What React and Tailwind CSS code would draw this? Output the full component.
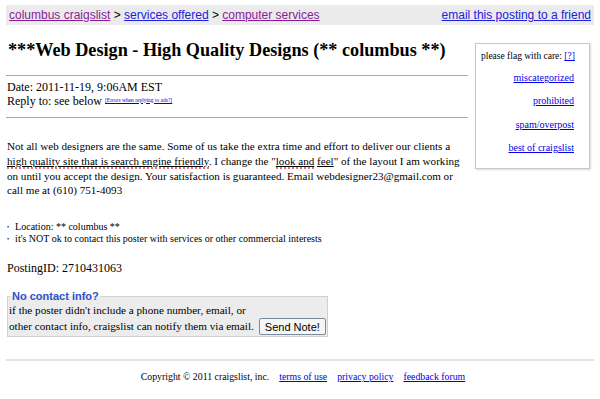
import React from "react";

const serif = "font-['Liberation_Serif',serif]";
const sans = "font-['Liberation_Sans',Arial,sans-serif]";

// spellcheck-style red dotted line under a phrase
const squiggle = "border-b-2 border-dotted border-[#f07070] underline";

function FlagBox() {
  const links = ["miscategorized", "prohibited", "spam/overpost", "best of craigslist"];
  return (
    <div className="mt-[18px] mr-[10px] h-[126px] w-[115px] shrink-0 border border-[#c8c8c8] bg-white pl-[5px] pr-[15px] pt-[6px] shadow-[1px_1px_2px_rgba(0,0,0,0.15)]">
      <div className="whitespace-nowrap text-[9.5px] leading-[12px] text-black">
        please flag with care: <a className="text-[#0000ee] underline">[?]</a>
      </div>
      <div className="mt-[4px] flex flex-col items-end">
        {links.map((l) => (
          <a key={l} className="whitespace-nowrap text-[10px] leading-[23.3px] text-[#0000ee] underline">
            {l}
          </a>
        ))}
      </div>
    </div>
  );
}

export default function App() {
  return (
    <div className={`${serif} h-[399px] w-[600px] overflow-hidden bg-white pt-[5px] text-black`}>
      {/* breadcrumb bar */}
      <div className={`${sans} mx-[6px] flex h-[20px] items-center justify-between bg-[#ebebeb] px-[3px] text-[12px]`}>
        <div>
          <a className="text-[#8b1a9b] underline">columbus craigslist</a> &gt;{" "}
          <a className="text-[#2020e0] underline">services offered</a> &gt;{" "}
          <a className="text-[#8b1a9b] underline">computer services</a>
        </div>
        <a className="text-[#2020e0] underline">email this posting to a friend</a>
      </div>

      <div className="flex">
        {/* left column */}
        <div className="ml-[6px] w-[462px]">
          <h2 className="mt-[14px] whitespace-nowrap pl-[2px] text-[18.2px] font-bold leading-[22px]">
            ***Web Design - High Quality Designs (** columbus **)
          </h2>
          <div className="mt-[14px] h-px bg-[#a8a8a8]" />

          <div className="mt-[5px] pl-[1px] text-[12px] leading-[13.5px]">
            <div>Date: 2011-11-19, 9:06AM EST</div>
            <div>
              Reply to: see below{" "}
              <sup className="relative top-[-3px] align-baseline text-[5.5px] text-[#0000ee] underline">
                [Errors when replying to ads?]
              </sup>
            </div>
          </div>

          <div className="mt-[9px] h-px bg-[#a8a8a8]" />

          <p className="mt-[21px] pl-[1px] text-[11.1px] leading-[14.8px]">
            Not all web designers are the same. Some of us take the extra time and effort to deliver our clients a{" "}
            <span className={squiggle}>high quality site that is search engine friendly</span>. I change the &quot;
            <span className={squiggle}>look and</span> <span className="underline">feel</span>&quot; of the layout I am
            working on until you accept the design. Your satisfaction is guaranteed. Email webdesigner23@gmail.com or
            call me at (610) 751-4093
          </p>

          <ul className="mt-[23px] pl-[1px] text-[10px] leading-[12px]">
            <li className="flex items-center gap-[6px]">
              <span className="text-[6px]">•</span>Location: ** columbus **
            </li>
            <li className="flex items-center gap-[6px]">
              <span className="text-[6px]">•</span>it's NOT ok to contact this poster with services or other commercial
              interests
            </li>
          </ul>

          <div className="mt-[16px] pl-[1px] text-[12px] leading-[15px]">PostingID: 2710431063</div>
        </div>

        <div className="flex-1" />
        <FlagBox />
      </div>

      {/* contact fieldset */}
      <fieldset className="mx-[7px] mt-[14px] w-[316px] border border-[#d0d0d0] bg-[#ececec] px-[1px] pb-[1px]">
        <legend className={`${sans} ml-[1px] px-[2px] text-[11px] font-bold leading-[12px] text-[#3050c8]`}>
          No contact info?
        </legend>
        <div className="whitespace-nowrap text-[11.2px] leading-[16px]">
          if the poster didn't include a phone number, email, or
        </div>
        <div className="flex items-center whitespace-nowrap text-[11.2px] leading-[17px]">
          other contact info, craigslist can notify them via email.
          <button
            className={`${sans} ml-[5px] h-[17px] whitespace-nowrap rounded-[2px] border border-[#7a8aa0] bg-[#f6f6f6] px-[5px] text-[11px] leading-[14px]`}
          >
            Send Note!
          </button>
        </div>
      </fieldset>

      <div className="mx-[6px] mt-[22px] h-[2px] bg-[#e2e2e2]" />

      <div className="mt-[10px] flex justify-center gap-[10px] whitespace-nowrap pl-[6px] text-[9.8px] leading-[12px]">
        <span>Copyright © 2011 craigslist, inc.</span>
        <a className="text-[#0000ee] underline">terms of use</a>
        <a className="text-[#0000ee] underline">privacy policy</a>
        <a className="text-[#0000ee] underline">feedback forum</a>
      </div>
    </div>
  );
}
